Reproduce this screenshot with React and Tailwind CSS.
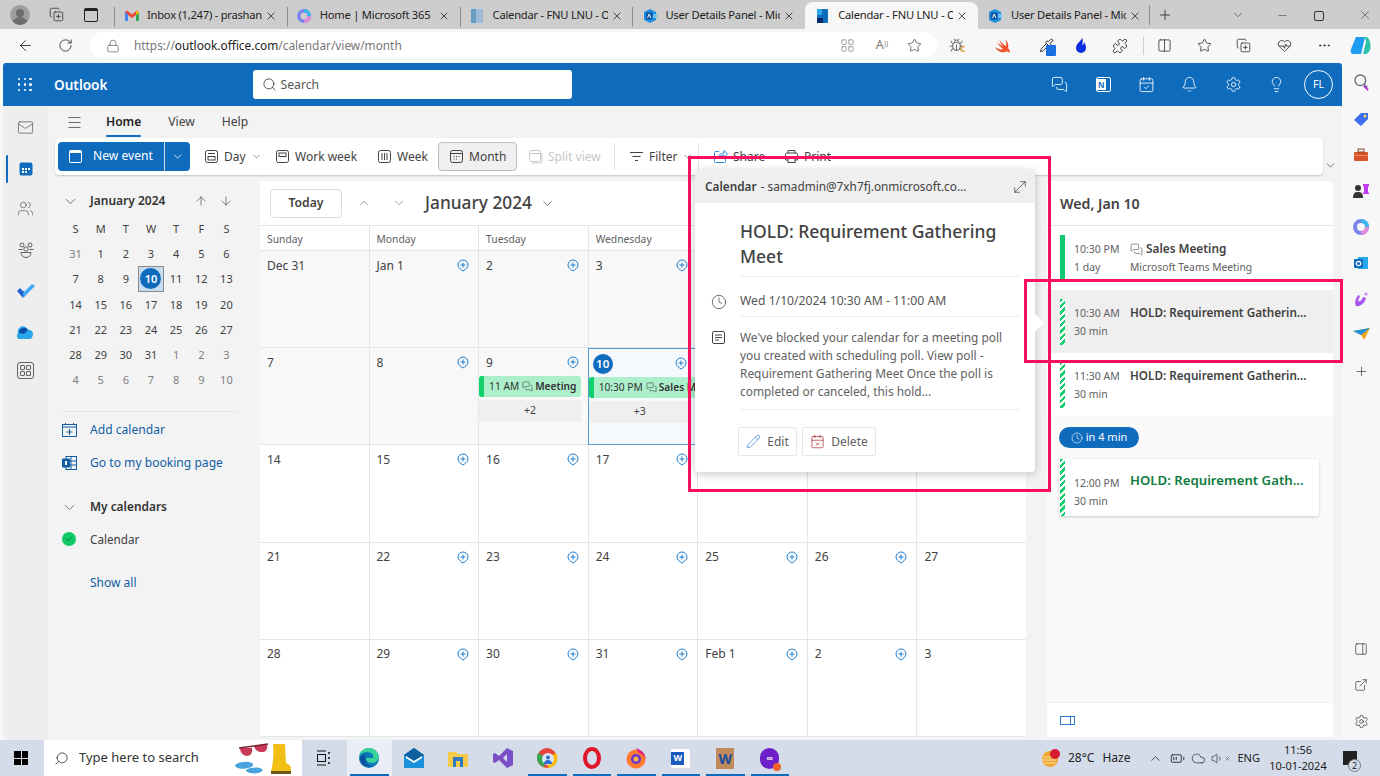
import React from "react";
import {
  X, Plus, Minus, ChevronDown, ChevronUp, ArrowLeft, ArrowUp, ArrowDown, RotateCw, Lock, Star, Puzzle, Columns2, MoreHorizontal,
  Search, MessagesSquare, CalendarCheck, Bell, Settings, Lightbulb, Mail, Users, Menu, Clock, Pencil, CalendarX, Check, ExternalLink, PanelRight, MoveDiagonal, LayoutGrid, Bug, Pipette, HeartPulse, CopyPlus, Volume1, Cloud, BatteryMedium,
} from "lucide-react";

const Gmail = () => (
  <svg width="14" height="12" viewBox="0 0 14 12"><path d="M0 2v9h3V5l4 3 4-3v6h3V2L12 .5 7 4.5 2 .5z" fill="#ea4335"/><path d="M0 2v9h3V4.5z" fill="#4285f4"/><path d="M14 2v9h-3V4.5z" fill="#34a853"/><path d="M11 5V2l1-1.5L14 2v1z" fill="#fbbc04"/></svg>
);
const M365 = ({ s = 14 }) => (
  <svg width={s} height={s} viewBox="0 0 16 16"><circle cx="8" cy="8" r="6" fill="none" stroke="#7b83eb" strokeWidth="4"/><path d="M8 2a6 6 0 0 1 6 6" fill="none" stroke="#39b6ea" strokeWidth="4"/><path d="M14 8a6 6 0 0 1-6 6" fill="none" stroke="#e08ad9" strokeWidth="4"/></svg>
);
const CalTab = () => (
  <svg width="14" height="16" viewBox="0 0 14 16"><rect x="1" y="1" width="12" height="14" fill="#9dbbd6"/><rect x="1" y="1" width="5" height="14" fill="#6b9cc4"/></svg>
);
const CalTabActive = () => (
  <svg width="13" height="16" viewBox="0 0 13 16"><rect x="1" y="1" width="11" height="14" rx="1" fill="#0f6cbd"/><rect x="1" y="1" width="5" height="6" fill="#28a8ea"/><rect x="1" y="10" width="6" height="5" fill="#0a2767"/></svg>
);
const Azure = () => (
  <svg width="16" height="16" viewBox="0 0 16 16"><path d="M8 1l6 3v8l-6 3-6-3V4z" fill="#1f8fe0"/><circle cx="13" cy="8" r="2.2" fill="#6fc3f2"/><rect x="4" y="4.5" width="6.5" height="7" rx="1" fill="#0b4f9e"/><path d="M5.5 10l1.7-4 1.7 4" stroke="#fff" strokeWidth="1" fill="none"/></svg>
);

const Tab = ({ icon, title, active, sep = true, w = 172.8 }) => (
  <div className={`relative flex h-[27px] shrink-0 items-center pl-[4px] pr-[6px] ${active ? "rounded-t-lg bg-[#f7f7f7]" : ""}`} style={{ width: w }}>
    <span className={`absolute left-0 top-[5px] h-[20px] w-px ${sep ? "bg-[#8f8f8f]" : ""}`} />
    <span className="flex w-[27px] justify-center">{icon}</span>
    <span className="ml-[2px] w-[115px] overflow-hidden whitespace-nowrap text-[11.2px] tracking-[-0.25px] text-[#222]">{title}</span>
    <X size={12} strokeWidth={1.6} className="ml-[3px] text-[#222]" />
  </div>
);

const Ext = ({ w = 40, children }) => <span className="flex shrink-0 items-center justify-center" style={{ width: w }}>{children}</span>;

function BrowserChrome() {
  return (
    <div className="flex h-[62px] flex-col bg-[#f7f7f7]">
      <div className="flex h-[29px] items-end bg-[#cdcdcd]">
        <div className="flex h-[29px] w-[114px] shrink-0 items-center">
          <span className="ml-[10px] flex h-[20px] w-[20px] items-center justify-center overflow-hidden rounded-full bg-[#9e9e9e]">
            <svg width="20" height="20" viewBox="0 0 20 20"><circle cx="10" cy="20" r="8" fill="#6d6d6d"/><circle cx="10" cy="8" r="4" fill="#6d6d6d"/></svg>
          </span>
          <span className="ml-[17px] flex w-[18px] justify-center"><CopyPlus size={15} strokeWidth={1.3} className="text-[#333]" /></span>
          <span className="ml-[19px] h-[14px] w-[14px] rounded-[2px] border-[1.5px] border-t-[3px] border-[#222]" />
        </div>
        <Tab icon={<Gmail />} title="Inbox (1,247) - prashant" />
        <Tab icon={<M365 />} title="Home | Microsoft 365" />
        <Tab icon={<CalTab />} title="Calendar - FNU LNU - O" />
        <Tab icon={<Azure />} title="User Details Panel - Mic" />
        <Tab icon={<CalTabActive />} title="Calendar - FNU LNU - O" active sep={false} />
        <Tab icon={<Azure />} title="User Details Panel - Mic" sep={false} w={171} />
        <span className="mb-[4px] h-[20px] w-px bg-[#8f8f8f]" />
        <span className="mb-[6px] ml-[7px] flex"><Plus size={16} strokeWidth={1.2} className="text-[#222]" /></span>
        <span className="mb-[7px] ml-[58px] flex"><ChevronDown size={14} strokeWidth={1} className="text-[#333]" /></span>
        <span className="mb-[7px] ml-[31px] flex"><Minus size={13} strokeWidth={1} className="text-[#333]" /></span>
        <span className="mb-[8px] ml-[25px] h-[10px] w-[10px] rounded-[2px] border border-[#333]" />
        <span className="mb-[7px] ml-[34px] flex"><X size={14} strokeWidth={1} className="text-[#333]" /></span>
      </div>
      <div className="flex h-[33px] items-center">
        <span className="ml-[17px] flex"><ArrowLeft size={17} strokeWidth={1.2} className="text-[#222]" /></span>
        <span className="ml-[24px] flex"><RotateCw size={15} strokeWidth={1.3} className="text-[#222]" /></span>
        <div className="ml-[17px] flex h-[27px] w-[847px] items-center rounded-full bg-white">
          <Lock size={14} strokeWidth={1.1} className="ml-[16px] text-[#555]" />
          <span className="ml-[14px] text-[11.85px] text-[#777]">https://<span className="text-[#222]">outlook.office.com</span>/calendar/view/month</span>
          <span className="ml-auto flex items-center">
            <LayoutGrid size={15} strokeWidth={1.1} className="text-[#777]" />
            <span className="ml-[21px] text-[12.5px] text-[#777]">A<sup className="text-[7px]">))</sup></span>
            <Star size={15} strokeWidth={1.1} className="ml-[19px] mr-[15px] text-[#333]" />
          </span>
        </div>
        <Ext w={38}><span className="relative flex"><Bug size={15} strokeWidth={1.4} className="text-[#555]" /><span className="absolute -right-[2px] bottom-[-2px] text-[8px] font-bold text-[#e8a33a]">C</span></span></Ext>
        <Ext w={56}><svg width="17" height="16" viewBox="0 0 17 16"><path d="M10 1c3 3 4 6 3 9 2 2 2 4 2 5-1-1-3-2-5-1-4 1-8-1-10-5 3 2 6 3 8 2C5 9 3 6 2 4c2 2 5 4 6 4C6 6 5 4 4 2c3 3 5 5 7 6 1-2 0-5-1-7z" fill="#f0532d"/></svg></Ext>
        <Ext w={30}><span className="relative flex"><Pipette size={15} strokeWidth={1.5} className="text-[#222]" /><span className="absolute -bottom-[3px] left-[7px] h-[11px] w-[10px] rounded-[1px] bg-[#1a6fe0]" /></span></Ext>
        <Ext w={40}><svg width="12" height="17" viewBox="0 0 12 17"><path d="M7 0c1 3-6 6-6 11a5 5 0 0 0 10 0c0-3-1-4-2-6 0 2-1 3-2 3 1-3 1-5 0-8z" fill="#0b2fe0"/></svg></Ext>
        <Ext w={38}><Puzzle size={16} strokeWidth={1.2} className="text-[#222]" /></Ext>
        <span className="ml-[4px] h-[18px] w-px bg-[#cfcfcf]" />
        <Ext w={40}><Columns2 size={15} strokeWidth={1.2} className="text-[#222]" /></Ext>
        <Ext w={40}><Star size={15} strokeWidth={1.2} className="text-[#222]" /></Ext>
        <Ext w={38}><CopyPlus size={15} strokeWidth={1.2} className="text-[#222]" /></Ext>
        <Ext w={44}><HeartPulse size={15} strokeWidth={1.2} className="text-[#222]" /></Ext>
        <Ext w={36}><MoreHorizontal size={15} strokeWidth={1.4} className="text-[#222]" /></Ext>
        <Ext w={36}><svg width="21" height="21" viewBox="0 0 21 21"><path d="M6 2h9l-4 17H4c-3 0-4-2-3-5z" fill="#1f9cf0"/><path d="M13 2h3c2 0 3 2 4 5 1 4 1 8-2 11-1 1-3 1-5 1l3-12c0-2-1-4-3-5z" fill="#2bc4a8"/></svg></Ext>
      </div>
    </div>
  );
}

const HeadIcon = ({ children }) => <span className="flex w-[43.3px] shrink-0 justify-center text-white">{children}</span>;

function OutlookHeader() {
  return (
    <div className="flex h-[43px] shrink-0 items-center rounded-t-[3px] bg-[#0f6cbd]">
      <span className="ml-[15px] grid w-[14px] grid-cols-3 gap-[3px]">
        {Array.from({ length: 9 }).map((_, i) => <i key={i} className="h-[2.4px] w-[2.4px] rounded-full bg-white" />)}
      </span>
      <span className="ml-[22px] pt-px text-[13.6px] font-semibold text-white">Outlook</span>
      <div className="ml-[145px] flex h-[29px] w-[319px] items-center rounded-[3px] bg-white">
        <Search size={15} strokeWidth={1.3} className="ml-[9px] text-[#333]" />
        <span className="ml-[4px] mt-[1px] text-[12.2px] text-[#555]">Search</span>
      </div>
      <span className="ml-auto flex items-center pr-[9px]">
        <HeadIcon><MessagesSquare size={17} strokeWidth={1.2} /></HeadIcon>
        <HeadIcon>
          <span className="flex h-[15px] w-[15px] items-center rounded-[2px] border border-white">
            <span className="flex h-[11px] w-[9px] items-center justify-center bg-white text-[8px] font-bold text-[#0f6cbd]">N</span>
          </span>
        </HeadIcon>
        <HeadIcon><CalendarCheck size={17} strokeWidth={1.2} /></HeadIcon>
        <HeadIcon><Bell size={17} strokeWidth={1.2} /></HeadIcon>
        <HeadIcon><Settings size={17} strokeWidth={1.2} /></HeadIcon>
        <HeadIcon><Lightbulb size={17} strokeWidth={1.2} /></HeadIcon>
        <span className="ml-[6px] flex h-[29px] w-[29px] items-center justify-center rounded-full border border-white text-[10.5px] text-white">FL</span>
      </span>
    </div>
  );
}

function Rail() {
  const item = "flex h-[41px] w-full items-center justify-center";
  return (
    <div className="relative flex w-[45px] shrink-0 flex-col bg-[#eeeeee] pt-[1px]">
      <div className={item}><Mail size={17} strokeWidth={1.1} className="text-[#616161]" /></div>
      <div className={`${item} relative`}>
        <span className="absolute left-[3px] top-[7px] h-[28px] w-[2px] rounded bg-[#0f6cbd]" />
        <svg width="14" height="14" viewBox="0 0 14 14"><rect x=".5" y=".5" width="13" height="13" rx="2" fill="#0f6cbd"/><rect x="3" y="6" width="2" height="2" fill="#fff"/><rect x="6" y="6" width="2" height="2" fill="#fff"/><rect x="9" y="6" width="2" height="2" fill="#fff"/><rect x="3" y="9" width="2" height="2" fill="#fff"/><rect x="6" y="9" width="2" height="2" fill="#fff"/></svg>
      </div>
      <div className={item}><Users size={17} strokeWidth={1.1} className="-mt-[2px] text-[#616161]" /></div>
      <div className={item}>
        <svg className="-mt-[2px]" width="18" height="18" viewBox="0 0 18 18" fill="none" stroke="#616161" strokeWidth="1"><circle cx="5" cy="4" r="2"/><circle cx="13" cy="4" r="2"/><circle cx="9" cy="8" r="2.2"/><path d="M1.5 8.5h4M12.5 8.5h4M4 11.5h10c0 3-2 5-5 5s-5-2-5-5z"/></svg>
      </div>
      <div className={item}>
        <svg className="-mt-[2px]" width="18" height="14" viewBox="0 0 18 14"><path d="M0 7l3-3 3.500 3.500L6 14z" fill="#2564cf"/><path d="M6.500 13.500L3.500 10l3-3 3 3z" fill="#2564cf"/><path d="M6.500 13.500L18 2l-3-2-9 9z" fill="#3fa9f5"/></svg>
      </div>
      <div className={item}>
        <svg width="19" height="13" viewBox="0 0 19 13"><path d="M2 7a5 5 0 0 1 10-3 4 4 0 0 1 5 4c0 1-1 5-3 5H3C1 13 0 9 2 7z" fill="#28a8ea"/><path d="M3 6a5 5 0 0 1 9-2L8 8 3 7z" fill="#0f4fa8"/></svg>
      </div>
      <div className={`${item} -mt-[3px]`}>
        <span className="grid h-[17px] w-[17px] grid-cols-2 gap-[1.5px] rounded-[3px] border border-[#616161] p-[2px]">
          <i className="rounded-[1px] border border-[#616161]" /><i className="rounded-[1px] border border-[#616161]" /><i className="rounded-[1px] border border-[#616161]" /><i className="rounded-[1px] border border-[#616161]" />
        </span>
      </div>
    </div>
  );
}

const Svg = ({ children, c = "currentColor" }) => (
  <svg width="15" height="15" viewBox="0 0 15 15" fill="none" stroke={c} strokeWidth="1">{children}</svg>
);
const Ico = {
  day: <Svg><rect x="1.500" y="1.500" width="12" height="12" rx="2"/><rect x="4" y="7.500" width="7" height="3.500"/><path d="M4 4.500h7"/></Svg>,
  work: <Svg><rect x="1.500" y="1.500" width="12" height="12" rx="2"/><rect x="4" y="4" width="7" height="3.500"/></Svg>,
  week: <Svg><rect x="1.500" y="1.500" width="12" height="12" rx="2"/><path d="M5 4v7M7.500 4v7M10 4v7"/></Svg>,
  month: <Svg><rect x="1.500" y="1.500" width="12" height="12" rx="2"/><path d="M1.500 4.500h12M4.500 7.500h1M7 7.500h1M9.500 7.500h1M4.500 10h1M7 10h1"/></Svg>,
  split: <Svg><rect x="1.500" y="1.500" width="11" height="11" rx="2"/><path d="M1.500 4.500h11M14 4v8.500a1.500 1.500 0 0 1-1.500 1.500H4"/></Svg>,
  filter: <Svg><path d="M1 3.500h13M3.500 7.500h8M6 11.500h3"/></Svg>,
  share: <Svg c="#2d8fe0"><path d="M6 2.500H2.500a1 1 0 0 0-1 1v9a1 1 0 0 0 1 1h9a1 1 0 0 0 1-1V9"/><path d="M5 9c0-3 3-5 6-5V1.500L14.500 5 11 8.500V6C9 6 6.500 7 5 9z"/></Svg>,
  print: <Svg><path d="M4 4V1.500h7V4M4 11H1.500V5.500a1.500 1.500 0 0 1 1.500-1.500h9a1.500 1.500 0 0 1 1.500 1.500V11H11"/><rect x="4" y="9" width="7" height="4.500"/></Svg>,
};

const RItem = ({ w, ml, icon, children, chev, dim }) => (
  <div className={`flex shrink-0 items-center ${dim ? "text-[#c8c8c8]" : "text-[#424242]"}`} style={{ width: w, marginLeft: ml }}>
    <span className="flex w-[15px] justify-center">{icon}</span>
    <span className="ml-[5px] whitespace-nowrap text-[12px]">{children}</span>
    {chev && <ChevronDown size={11} strokeWidth={1.2} className="ml-[5px]" />}
  </div>
);

function Ribbon() {
  return (
    <div className="relative ml-[7px] flex h-[37px] w-[1268px] shrink-0 items-center rounded-[4px] bg-white shadow-[0_1px_2px_rgba(0,0,0,0.2)]">
      <div className="ml-[3px] flex h-[29px] w-[132px] shrink-0 overflow-hidden rounded-[4px] bg-[#0f6cbd] text-white">
        <span className="flex flex-1 items-center border-r border-[#cfe0f0] pl-[11px]">
          <span className="h-[13px] w-[13px] rounded-[2px] border border-t-[3px] border-white" />
          <span className="ml-[11px] whitespace-nowrap text-[12.1px]">New event</span>
        </span>
        <span className="flex w-[25px] items-center justify-center"><ChevronDown size={13} strokeWidth={1.5} /></span>
      </div>
      <RItem ml="14px" w="71px" chev icon={Ico.day}>Day</RItem>
      <RItem ml="0px" w="102px" icon={Ico.work}>Work week</RItem>
      <RItem ml="0px" w="61px" icon={Ico.week}>Week</RItem>
      <div className="flex h-[29px] w-[79px] shrink-0 items-center rounded-[4px] border border-[#bdbdbd] bg-[#f0f0f0] pl-[10px] text-[#424242]">
        {Ico.month}
        <span className="ml-[5px] text-[12px]">Month</span>
      </div>
      <RItem ml="11px" w="86px" dim icon={Ico.split}>Split view</RItem>
      <span className="h-[27px] w-px bg-[#e0e0e0]" />
      <RItem ml="14px" w="69px" chev icon={Ico.filter}>Filter</RItem>
      <span className="h-[27px] w-px bg-[#e0e0e0]" />
      <RItem ml="14px" w="71px" icon={Ico.share}>Share</RItem>
      <RItem ml="0px" w="70px" icon={Ico.print}>Print</RItem>
    </div>
  );
}

const mini = [
  [31, 1, 2, 3, 4, 5, 6], [7, 8, 9, 10, 11, 12, 13], [14, 15, 16, 17, 18, 19, 20], [21, 22, 23, 24, 25, 26, 27], [28, 29, 30, 31, 1, 2, 3], [4, 5, 6, 7, 8, 9, 10],
];

function LeftPanel() {
  return (
    <div className="w-[212px] shrink-0 pl-[14px]">
      <div className="mt-[8px] flex h-[24px] items-center">
        <ChevronDown size={17} strokeWidth={1} className="text-[#424242]" />
        <span className="ml-[11px] text-[12px] font-semibold text-[#333]">January 2024</span>
        <ArrowUp size={14} strokeWidth={1.1} className="ml-[29px] text-[#444]" />
        <ArrowDown size={14} strokeWidth={1.1} className="ml-[11px] text-[#444]" />
      </div>
      <div className="ml-[1px] mt-[3px] grid w-[176px] grid-cols-7 text-center text-[11px] text-[#424242]">
        {["S", "M", "T", "W", "T", "F", "S"].map((d, i) => <div key={i} className="h-[25.2px] leading-[25px]">{d}</div>)}
        {mini.flatMap((r, ri) => r.map((d, ci) => {
          const out = (ri === 0 && d > 20) || (ri >= 4 && d < 15);
          if (d === 10 && ri === 1) return (
            <div key="t" className="flex h-[25.200px] items-center justify-center border border-[#8a8a8a] bg-[#c7dcf0]">
              <span className="flex h-[21px] w-[21px] items-center justify-center rounded-full bg-[#0f6cbd] font-semibold text-white">10</span>
            </div>
          );
          return <div key={`${ri}-${ci}`} className={`h-[25.2px] leading-[25px] ${out ? "text-[#808080]" : ""}`}>{d}</div>;
        }))}
      </div>
      <div className="mt-[19px] w-[176px] border-t border-[#e6e6e6]" />
      <div className="mt-[8px] flex h-[20px] items-center text-[12.1px] text-[#115ea3]">
        <svg width="15" height="14" viewBox="0 0 15 14" fill="none" stroke="#115ea3"><rect x=".5" y="1.500" width="14" height="12"/><path d="M.5 4h14M7.500 6v6M4.500 9h6M3.500 0v2M11.500 0v2"/></svg>
        <span className="ml-[13px]">Add calendar</span>
      </div>
      <div className="mt-[13px] flex h-[20px] items-center text-[12.1px] text-[#115ea3]">
        <svg width="15" height="14" viewBox="0 0 15 14"><rect x="4" y=".5" width="10.500" height="13" fill="none" stroke="#115ea3"/><path d="M4 5h10M4 9h10M9 1v12" stroke="#115ea3" fill="none"/><rect x="0" y="2.500" width="8" height="9" rx="1" fill="#115ea3"/><rect x="3" y="5" width="2" height="4" fill="#fff"/></svg>
        <span className="ml-[13px]">Go to my booking page</span>
      </div>
      <div className="mt-[24px] flex h-[20px] items-center">
        <ChevronDown size={17} strokeWidth={1} className="-ml-px text-[#424242]" />
        <span className="ml-[12px] text-[11.9px] font-semibold text-[#333]">My calendars</span>
      </div>
      <div className="mt-[12px] flex h-[20px] items-center">
        <span className="flex h-[14px] w-[14px] items-center justify-center rounded-full bg-[#13c866]"><Check size={8} strokeWidth={2} className="text-[#0d5c31]" /></span>
        <span className="ml-[14px] text-[11.7px] text-[#424242]">Calendar</span>
      </div>
      <div className="ml-[28px] mt-[25px] text-[12px] text-[#115ea3]">Show all</div>
    </div>
  );
}

const PlusPin = () => (
  <svg width="12" height="13" viewBox="0 0 12 13" fill="none" stroke="#1b7ed0" strokeWidth="1"><path d="M6 12C4 10.500 1 9 1 6a5 5 0 0 1 10 0c0 3-3 4.500-5 6z"/><path d="M6 3.500v5M3.500 6h5"/></svg>
);

const weeks = [
  ["Dec 31", "Jan 1", "2", "3", "4", "5", "6"],
  ["7", "8", "9", "10", "11", "12", "13"],
  ["14", "15", "16", "17", "18", "19", "20"],
  ["21", "22", "23", "24", "25", "26", "27"],
  ["28", "29", "30", "31", "Feb 1", "2", "3"],
];

const Chip = ({ time, title, w = 102 }) => (
  <div className="flex h-[21px] shrink-0 items-center overflow-hidden rounded-[3px] bg-[#aeefcb] text-[10.2px] text-[#333]" style={{ width: w }}>
    <span className="h-full w-[5px] shrink-0 bg-[#13d06e]" />
    <span className="ml-[5px] whitespace-nowrap">{time}</span>
    <MessagesSquare size={11} strokeWidth={1.2} className="ml-[3px] shrink-0" />
    <span className="ml-[2px] whitespace-nowrap font-semibold">{title}</span>
  </div>
);

const More = ({ n }) => <div className="flex h-[22px] w-[102px] items-center justify-center rounded-[3px] bg-[#efefef] text-[10.5px] text-[#424242]">{n}</div>;

function CalendarCard() {
  return (
    <div className="flex w-[766px] shrink-0 flex-col bg-white">
      <div className="flex h-[45px] shrink-0 items-center rounded-t-[4px] border-b border-[#e6e6e6]">
        <span className="ml-[10px] flex h-[29px] w-[72px] items-center justify-center rounded-[4px] border border-[#dcdcdc] pt-px text-[12.2px] font-semibold text-[#424242]">Today</span>
        <ChevronUp size={14} strokeWidth={1} className="ml-[15px] text-[#555]" />
        <ChevronDown size={14} strokeWidth={1} className="ml-[21px] text-[#555]" />
        <span className="ml-[19px] text-[17.3px] font-medium text-[#424242]">January 2024</span>
        <ChevronDown size={15} strokeWidth={1.1} className="ml-[8px] text-[#424242]" />
      </div>
      <div className="grid h-[25px] shrink-0 grid-cols-[108.5px_repeat(6,1fr)] border-b border-[#e6e6e6]">
        {["Sunday", "Monday", "Tuesday", "Wednesday", "Thursday", "Friday", "Saturday"].map((d, i) => (
          <div key={d} className={`pl-[7px] text-[10.3px] leading-[27px] text-[#616161] ${i ? "border-l border-[#e6e6e6]" : ""}`}>{i < 4 ? d : ""}</div>
        ))}
      </div>
      <div className="grid flex-1 grid-cols-[108.5px_repeat(6,1fr)] grid-rows-5">
        {weeks.flatMap((w, ri) => w.map((d, ci) => {
          const today = ri === 1 && ci === 3;
          const past = ri < 2 && !today;
          const underPopup = ri <= 2 && ci >= 4;
          const cls = today
            ? "border border-[#5b9bd5] bg-[#f5f9fd]"
            : `border-b border-[#e6e6e6] ${ci ? "border-l" : ""} ${past ? "bg-[#f8f8f8]" : "bg-white"}`;
          return (
            <div key={`${ri}-${ci}`} className={`relative overflow-hidden ${cls}`}>
              {!underPopup && (
                <div className="flex h-[25px] items-center justify-between pl-[7px] pr-[9px] pt-[4px]">
                  {today
                    ? <span className="-ml-[3px] flex h-[20px] w-[20px] items-center justify-center rounded-full bg-[#0f6cbd] text-[11.5px] font-semibold text-white">10</span>
                    : <span className="text-[12px] text-[#424242]">{d}</span>}
                  {ci > 0 && ci < 6 && <PlusPin />}
                </div>
              )}
              {ri === 1 && ci === 2 && (
                <div className="mt-[3px] flex flex-col gap-[3px]">
                  <Chip time="11 AM" title="Meeting" />
                  <More n="+2" />
                </div>
              )}
              {today && (
                <div className="mt-[3px] flex flex-col gap-[3px]">
                  <Chip time="10:30 PM" title="Sales Meeting" w={108} />
                  <More n="+3" />
                </div>
              )}
            </div>
          );
        }))}
      </div>
    </div>
  );
}

const Hatch = ({ h }) => (
  <span className="w-[5px] shrink-0 bg-[repeating-linear-gradient(135deg,#13d06e_0,#13d06e_2.5px,#ffffff_2.5px,#ffffff_4.500px)]" style={{ height: h }} />
);

const HoldRow = ({ bg, time }) => (
  <div className={`flex h-[63px] items-center pl-[13px] ${bg}`}>
    <Hatch h={46} />
    <div className="ml-[9px] w-[56px] text-[10.5px] leading-[18px] text-[#616161]">
      <div>{time}</div><div>30 min</div>
    </div>
    <div className="-mt-[18px] whitespace-nowrap text-[11.7px] font-semibold text-[#424242]">HOLD: Requirement Gatherin...</div>
  </div>
);

function RightPanel() {
  return (
    <div className="ml-[21px] flex w-[286px] shrink-0 flex-col rounded-t-[4px] bg-white">
      <div className="flex h-[45px] shrink-0 items-center border-b border-[#e6e6e6] pl-[13px] pt-px text-[14.2px] font-semibold text-[#424242]">Wed, Jan 10</div>
      <div className="flex h-[64px] shrink-0 items-start pl-[13px] pt-[9px]">
        <span className="h-[46px] w-[5px] shrink-0 bg-[#13c96f]" />
        <div className="ml-[9px] w-[56px] pt-[5px] text-[10.5px] leading-[18px] text-[#616161]">
          <div>10:30 PM</div><div>1 day</div>
        </div>
        <div className="pt-[5px]">
          <div className="flex h-[18px] items-center text-[11.8px] font-semibold text-[#424242]">
            <MessagesSquare size={13} strokeWidth={1.1} /><span className="ml-[3px]">Sales Meeting</span>
          </div>
          <div className="text-[10.3px] leading-[18px] text-[#616161]">Microsoft Teams Meeting</div>
        </div>
      </div>
      <HoldRow bg="bg-[#efefef]" time="10:30 AM" />
      <HoldRow bg="bg-white" time="11:30 AM" />
      <div className="flex flex-1 flex-col bg-[#fafafa] pl-[12px]">
        <span className="mt-[11px] flex h-[21px] w-[80px] items-center justify-center rounded-full bg-[#0f6cbd] text-[11px] text-white">
          <Clock size={12} strokeWidth={1.2} /><span className="ml-[3px]">in 4 min</span>
        </span>
        <div className="mt-[11px] flex h-[57px] w-[260px] items-center rounded-[2px] bg-white pl-[1px] shadow-[0_1px_3px_rgba(0,0,0,0.2)]">
          <Hatch h={57} />
          <div className="ml-[9px] w-[56px] text-[10.5px] leading-[18px] text-[#616161]"><div className="mt-[8px]">12:00 PM</div><div>30 min</div></div>
          <div className="-mt-[13px] whitespace-nowrap text-[13.2px] font-semibold text-[#107c41]">HOLD: Requirement Gath...</div>
        </div>
      </div>
      <div className="flex h-[35px] shrink-0 items-center border-t border-[#efefef] bg-white pl-[13px]">
        <span className="flex h-[9px] w-[15px] items-center justify-end border border-[#2b79d4] pr-[3px]"><span className="h-full w-px bg-[#2b79d4]" /></span>
      </div>
    </div>
  );
}

function Popup() {
  return (
    <div className="absolute left-[695px] top-[170px] h-[302px] w-[340px] rounded-[4px] bg-white shadow-[0_2px_10px_rgba(0,0,0,0.22)]">
      <span className="absolute right-[-9px] top-[143px] h-0 w-0 border-y-[10px] border-l-[10px] border-y-transparent border-l-white" />
      <div className="flex h-[33px] items-center rounded-t-[4px] bg-[#efefef] pl-[10px] text-[11.8px] text-[#424242]">
        <span className="font-semibold">Calendar</span><span className="ml-[4px]">- samadmin@7xh7fj.onmicrosoft.co...</span>
        <MoveDiagonal size={18} strokeWidth={1} className="ml-auto mr-[6px]" />
      </div>
      <div className="ml-[45px] mr-[14px] border-b border-[#efefef] pb-[7px] pt-[16px] text-[17.5px] font-medium leading-[25px] text-[#424242]">HOLD: Requirement Gathering Meet</div>
      <div className="flex h-[39px] items-end pb-[6px]">
        <span className="flex w-[45px] justify-center pl-[2px]"><Clock size={16} strokeWidth={1.1} className="text-[#424242]" /></span>
        <span className="text-[12.2px] text-[#555]">Wed 1/10/2024 10:30 AM - 11:00 AM</span>
      </div>
      <div className="flex">
        <span className="flex w-[45px] justify-center pl-[2px] pt-[15px]"><svg width="13" height="13" viewBox="0 0 13 13" fill="none" stroke="#424242"><rect x=".5" y=".5" width="12" height="12" rx="1.5"/><path d="M3 4h7M3 6.500h7M3 9h4"/></svg></span>
        <div className="mr-[14px] flex-1 border-y border-[#efefef] pb-[9px] pt-[11px] text-[11.9px] leading-[18px] text-[#616161]">We've blocked your calendar for a meeting poll you created with scheduling poll. View poll - Requirement Gathering Meet Once the poll is completed or canceled, this hold...</div>
      </div>
      <div className="ml-[43px] mt-[17px] flex gap-[5px] text-[12px] text-[#616161]">
        <span className="flex h-[29px] w-[59px] items-center justify-center rounded-[2px] border border-[#e6e6e6]"><Pencil size={15} strokeWidth={1.1} className="text-[#2b79d4]" /><span className="ml-[6px]">Edit</span></span>
        <span className="flex h-[29px] w-[74px] items-center justify-center rounded-[2px] border border-[#e6e6e6]"><CalendarX size={15} strokeWidth={1.1} className="text-[#a4262c]" /><span className="ml-[6px]">Delete</span></span>
      </div>
    </div>
  );
}

const EdgeSide = () => (
  <div className="flex w-[38px] shrink-0 flex-col items-center bg-[#f7f7f7]">
    <div className="mt-[10px] flex flex-col items-center gap-[20px]">
      <span className="relative mb-[2px] h-[16px] w-[16px]"><Search size={16} strokeWidth={2} className="text-[#5f6b75]" /><i className="absolute bottom-0 right-0 h-[2px] w-[6px] rotate-45 bg-[#b02ee0]" /></span>
      <svg width="16" height="16" viewBox="0 0 16 16"><path d="M1 9l7-7h7v6l-7 7z" fill="#3a6ff0"/><circle cx="12" cy="5" r="1.500" fill="#ffd35c"/></svg>
      <svg width="16" height="16" viewBox="0 0 16 16"><rect x="1" y="5" width="14" height="9" rx="1" fill="#d9532c"/><rect x="5" y="2" width="6" height="3" fill="none" stroke="#8a4a32"/><rect x="1" y="8" width="14" height="1" fill="#f08a5a"/></svg>
      <svg width="18" height="16" viewBox="0 0 18 16"><circle cx="6" cy="5" r="3" fill="#333"/><path d="M1 15c0-5 2-6 5-6s5 1 5 6z" fill="#333"/><path d="M11 1h6v2l-1 1v5l1 1v1h-6v-1l1-1V4l-1-1z" fill="#c03bf0"/></svg>
      <M365 s={16} />
      <svg width="16" height="16" viewBox="0 0 16 16"><rect x="5" y="2" width="10" height="12" fill="#28a8ea"/><rect x="1" y="4" width="9" height="9" rx="1" fill="#0f6cbd"/><circle cx="5.500" cy="8.500" r="2.200" fill="none" stroke="#fff" strokeWidth="1.200"/></svg>
      <svg width="16" height="16" viewBox="0 0 16 16"><path d="M3 15C1 10 3 8 5 4l2 1-2 5c2 1 4-1 5-4l3 1c-1 5-6 9-10 8z" fill="#a855f0"/><circle cx="13" cy="3" r="1.500" fill="#c084fc"/></svg>
      <svg width="17" height="14" viewBox="0 0 17 14"><path d="M0 4l17-3-6 12-3-5z" fill="#f2a81d"/><path d="M0 4l8 4 9-7z" fill="#1c94e0"/></svg>
      <Plus size={15} strokeWidth={1.1} className="mt-[3px] text-[#333]" />
    </div>
    <div className="mt-auto mb-[11px] flex flex-col items-center gap-[22px] text-[#333]">
      <PanelRight size={14} strokeWidth={1.2} />
      <ExternalLink size={14} strokeWidth={1.2} />
      <Settings size={15} strokeWidth={1.2} />
    </div>
  </div>
);

const TaskIcon = ({ children, underline, active }) => (
  <div className={`relative flex h-full w-[44.5px] shrink-0 items-center justify-center ${active ? "bg-[#e9eef6]" : ""}`}>
    {children}
    {underline && <span className="absolute bottom-0 left-[3px] right-[3px] h-[2px] bg-[#0f6cbd]" />}
  </div>
);

function Taskbar() {
  return (
    <div className="flex h-[36px] shrink-0 items-center bg-[#d4dcea]">
      <span className="ml-[14px] grid h-[14px] w-[14px] grid-cols-2 gap-px">
        <i className="bg-black" /><i className="bg-black" /><i className="bg-black" /><i className="bg-black" />
      </span>
      <div className="ml-[16px] flex h-full w-[258px] items-center bg-white">
        <Search size={15} strokeWidth={1.2} className="ml-[10px] -scale-x-100 text-[#222]" />
        <span className="ml-[10px] text-[13px] text-[#333]">Type here to search</span>
        <span className="ml-auto mr-[6px] flex items-end">
          <svg width="62" height="34" viewBox="0 0 62 34">
            <path d="M6 7h12c1 4-1 8-5 8S6 11 6 7zM20 5l13-2c1 5-1 8-5 8s-7-2-8-6z" fill="#c93a58" /><path d="M5 7l29-4" stroke="#7a2130" strokeWidth="1.500" />
            <path d="M1 24c5-4 13-4 17-2 3 2 0 4-4 5-6 2-13 0-13-3zM12 29c5-3 12-3 16-1 2 2-1 3-4 4-5 1-12 0-12-3z" fill="#4aa3df" />
            <path d="M39 3h12l1 19c3 1 5 3 5 6v3H37c2-8 3-18 2-28z" fill="#f2c014" /><rect x="37" y="30" width="20" height="3" fill="#6d5a10" />
          </svg>
        </span>
      </div>
      <span className="ml-[14px] flex w-[15px] justify-center"><svg width="15" height="16" viewBox="0 0 15 16" fill="none" stroke="#111"><path d="M1 1h9M1 15h9"/><rect x="1.500" y="4.500" width="8" height="7"/><path d="M13 2v2M13 7v2M13 12v2" strokeWidth="1.500"/></svg></span>
      <div className="ml-[16px] flex h-full items-center">
        <TaskIcon active underline><svg width="22" height="22" viewBox="0 0 22 22"><circle cx="11" cy="11" r="10" fill="#0b78b8"/><path d="M21 11c0-5-4-10-10-10C6 1 2 4 1 9c2-3 5-4 8-4 5 0 7 3 6 6H8c0 3 3 5 6 5 2 0 4-1 5-2z" fill="#37d39a"/><path d="M7 12c0 5 4 7 7 7-8 2-12-3-12-8 2-3 4-4 6-4-1 1-1 3-1 5z" fill="#0a4f9e"/></svg></TaskIcon>
        <TaskIcon><svg width="22" height="20" viewBox="0 0 22 20"><path d="M1 7l10-7 10 7v13H1z" fill="#1a90d9"/><path d="M1 7l10 6 10-6-10-7z" fill="#0d5f9e"/><path d="M3 8l8 5 8-5v2l-8 5-8-5z" fill="#fff"/></svg></TaskIcon>
        <TaskIcon><svg width="20" height="18" viewBox="0 0 20 18"><path d="M0 3h8l2 2h10v13H0z" fill="#f6c94a"/><rect x="5" y="8" width="10" height="10" fill="#2f7dc0"/><rect x="8" y="12" width="4" height="6" fill="#f6c94a"/></svg></TaskIcon>
        <TaskIcon><svg width="20" height="20" viewBox="0 0 20 20"><path d="M14 0l6 3v14l-6 3-8-8-4 3-2-1V6l2-1 4 3zM14 6l-4 4 4 4z" fill="#7a4fc7"/></svg></TaskIcon>
        <TaskIcon underline><svg width="22" height="22" viewBox="0 0 22 22"><circle cx="11" cy="11" r="10" fill="#e8453c"/><path d="M11 11L2 6a10 10 0 0 0 6 14z" fill="#34a853"/><path d="M11 11l9-5a10 10 0 0 1-8 15z" fill="#fbbc04"/><circle cx="12" cy="12" r="6" fill="#dbe6f7"/><circle cx="12" cy="10.500" r="2" fill="#2b6fd4"/><path d="M8 17c0-3 2-4 4-4s4 1 4 4z" fill="#2b6fd4"/></svg></TaskIcon>
        <TaskIcon underline><span className="h-[22px] w-[18px] rounded-[50%] border-[4px] border-[#e0162b]" /></TaskIcon>
        <TaskIcon underline><svg width="22" height="22" viewBox="0 0 22 22"><circle cx="11" cy="12" r="9.500" fill="#ff7a30"/><path d="M11 1c5 2 9 5 10 11-2-4-4-5-7-6z" fill="#e31587"/><circle cx="11" cy="12" r="5" fill="#6a3ad0"/><circle cx="11" cy="12" r="2.500" fill="#ffb340"/></svg></TaskIcon>
        <TaskIcon underline><span className="flex h-[19px] w-[19px] items-center rounded-[2px] bg-white"><span className="flex h-[13px] w-[13px] items-center justify-center bg-[#185abd] text-[9px] font-bold text-white">W</span></span></TaskIcon>
        <TaskIcon underline><span className="flex h-[21px] w-[18px] items-center justify-center bg-[#c08a5a] text-[14px] font-bold text-[#1a4d9c]">W</span></TaskIcon>
        <TaskIcon underline><span className="relative flex h-[21px] w-[19px] items-center justify-center rounded-full bg-[#6d1fc9] text-[9px] font-bold text-white">∞<i className="absolute -bottom-[2px] -right-[2px] h-[8px] w-[8px] rounded-full bg-[#f0602a]" /></span></TaskIcon>
      </div>
      <svg className="ml-[250px]" width="18" height="20" viewBox="0 0 18 20"><circle cx="8" cy="11" r="8" fill="#f2a72e"/><path d="M1 9h14M0 12h14M2 15h12" stroke="#fbe3a8"/><circle cx="13" cy="6" r="5" fill="#d81b30"/></svg>
      <span className="ml-[8px] whitespace-nowrap text-[12px] text-[#222]">28°C</span>
      <span className="ml-[8px] whitespace-nowrap text-[12px] text-[#222]">Haze</span>
      <ChevronUp size={15} strokeWidth={1.2} className="ml-[17px] text-[#222]" />
      <BatteryMedium size={15} strokeWidth={1.4} className="ml-[7px] text-[#222]" />
      <Cloud size={15} strokeWidth={1.2} className="ml-[6px] text-[#333]" />
      <span className="ml-[5px] flex items-center text-[#222]"><Volume1 size={13} strokeWidth={1.2} /><X size={7} strokeWidth={1.5} /></span>
      <span className="ml-[7px] text-[11px] text-[#222]">ENG</span>
      <span className="ml-[6px] w-[64px] text-center text-[11px] leading-[16px] text-[#222]">11:56<br />10-01-2024</span>
      <span className="relative ml-[13px] flex h-[14px] w-[14px] bg-[#222]"><span className="absolute -bottom-[7px] left-[5px] flex h-[13px] w-[13px] items-center justify-center rounded-full border border-[#777] bg-[#d4dcea] text-[9px] text-[#222]">2</span></span>
    </div>
  );
}

export default function App() {
  return (
    <div className="relative flex h-[776px] w-[1380px] flex-col overflow-hidden bg-[#f7f7f7] font-['Noto_Sans',sans-serif]">
      <BrowserChrome />
      <div className="flex min-h-0 flex-1 pt-px">
        <div className="ml-[3px] flex min-w-0 flex-1 flex-col overflow-hidden rounded-b-[6px]">
          <OutlookHeader />
          <div className="flex min-h-0 flex-1 bg-[#f3f3f3]">
            <Rail />
            <div className="flex min-w-0 flex-1 flex-col">
              <div className="flex h-[32px] shrink-0 items-center">
                <Menu size={17} strokeWidth={1.1} className="ml-[18px] text-[#424242]" />
                <span className="relative ml-[23px] text-[12.1px] font-semibold text-[#242424]">Home<i className="absolute -bottom-[6px] left-0 right-0 h-[2px] rounded bg-[#0f6cbd]" /></span>
                <span className="ml-[27px] text-[12.1px] text-[#424242]">View</span>
                <span className="ml-[27px] text-[12.1px] text-[#424242]">Help</span>
              </div>
              <div className="relative shrink-0">
                <Ribbon />
                <ChevronDown size={13} strokeWidth={1.3} className="absolute bottom-[3px] right-[5px] text-[#424242]" />
              </div>
              <div className="mt-[6px] flex min-h-0 flex-1 pb-[3px]">
                <LeftPanel />
                <CalendarCard />
                <RightPanel />
              </div>
            </div>
          </div>
        </div>
        <EdgeSide />
      </div>
      <Taskbar />
      <Popup />
      <div className="pointer-events-none absolute left-[688px] top-[156px] h-[336px] w-[363px] border-[3px] border-[#ff0d5f]" />
      <div className="pointer-events-none absolute left-[1024px] top-[279px] h-[84px] w-[319px] border-[3px] border-[#ff0d5f]" />
    </div>
  );
}
